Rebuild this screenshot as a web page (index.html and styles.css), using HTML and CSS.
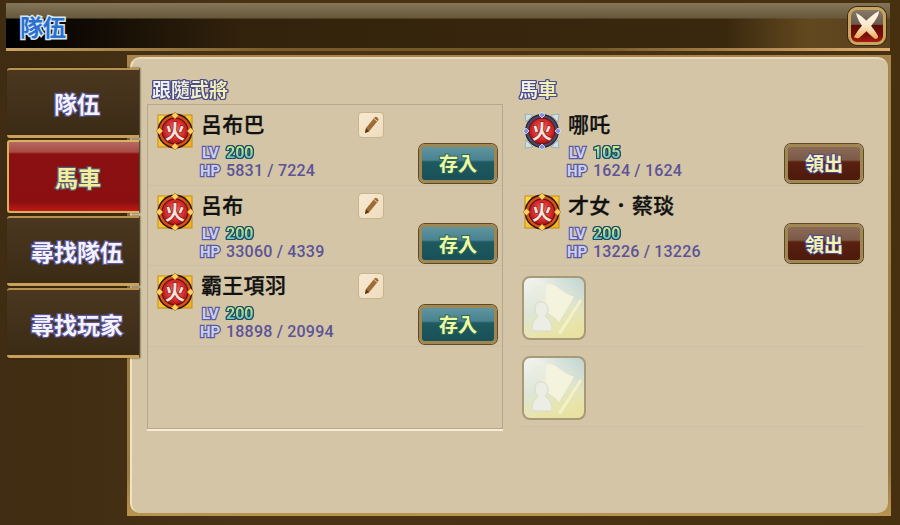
FILE: index.html
```html
<!DOCTYPE html>
<html lang="zh-Hant">
<head>
  <meta charset="UTF-8">
  <title>隊伍</title>
  <link rel="stylesheet" href="styles.css">
</head>
<body>

  <!-- Icons -->
  <svg class="defs" width="0" height="0">
    <defs>
      <radialGradient id="redBall" cx="50%" cy="45%" r="55%">
        <stop offset="0" stop-color="#f0706c"/>
        <stop offset="0.65" stop-color="#dc2f30"/>
        <stop offset="1" stop-color="#a81416"/>
      </radialGradient>
      <linearGradient id="goldSq" x1="0" y1="0" x2="1" y2="1">
        <stop offset="0" stop-color="#fbdc48"/>
        <stop offset="1" stop-color="#f0ac20"/>
      </linearGradient>
      <linearGradient id="blade" x1="0" y1="0" x2="0" y2="1">
        <stop offset="0" stop-color="#fdf8ea"/>
        <stop offset="0.55" stop-color="#f8e8c8"/>
        <stop offset="1" stop-color="#eca858"/>
      </linearGradient>
      <symbol id="badgeGold" viewBox="0 0 38 38">
        <rect x="2" y="3" width="34" height="32" fill="url(#goldSq)" stroke="#c88a18"/>
        <circle cx="19" cy="19" r="17.500" fill="#301408"/>
        <circle cx="19" cy="19" r="16" fill="#d4521c"/>
        <circle cx="19" cy="19" r="13.500" fill="#5a1008"/>
        <circle cx="19" cy="19" r="12.500" fill="url(#redBall)"/>
        <path d="M19 0l3.500 3.500-3.500 3.500-3.500-3.500zM19 31l3.500 3.500-3.500 3.500-3.500-3.500zM0 19l3.500-3.500 3.500 3.500-3.500 3.500zM31 19l3.500-3.500 3.500 3.500-3.500 3.500z" fill="#fad060" stroke="#b86a10" stroke-width=".6"/>
      </symbol>
      <symbol id="badgeSilver" viewBox="0 0 38 38">
        <path d="M2 2l8 1-7 7zM36 2l-8 1 7 7zM2 36l8-1-7-7zM36 36l-8-1 7-7z" fill="#d0e0e4" stroke="#8098a8" stroke-width=".6"/>
        <circle cx="19" cy="19" r="17" fill="#2a2a40"/>
        <circle cx="19" cy="19" r="15.500" fill="#4a4a6c"/>
        <circle cx="19" cy="19" r="13.500" fill="#6a1214"/>
        <circle cx="19" cy="19" r="12.500" fill="url(#redBall)"/>
        <path d="M19 0l3 3-3 3-3-3zM19 32l3 3-3 3-3-3zM0 19l3-3 3 3-3 3zM32 19l3-3 3 3-3 3z" fill="#8890e0" stroke="#eef0fa" stroke-width=".7"/>
      </symbol>
      <symbol id="pencil" viewBox="0 0 26 26">
        <path d="M7 21l1-5L16.500 5.500a1.800 1.800 0 0 1 2.800 0l.5.500a1.800 1.800 0 0 1 0 2.800L11 19.500z" fill="#a06c36"/>
        <path d="M16 6.500l3.500 3" stroke="#ead4ac" stroke-width="1"/>
        <path d="M7 21l1-5 3 3.500z" fill="#553818"/>
      </symbol>
      <symbol id="slotIcon" viewBox="0 0 60 60">
        <path d="M7 9c6-1 11-1 16 1l-2 14-4 0z" fill="#e8ecdc" opacity=".8"/>
        <path d="M23 6c3 0 5 0 7 1 6 4 12 9 20 12L35 44c-3-4-7-7-11-9 1-3 0-6-3-8z" fill="#f3f3de"/>
        <path d="M56 21l2 2-21 33-3-1z" fill="#f4f0c8"/>
        <path d="M17 24c4 0 7 3 7 7 0 3-1 5-3 7 4 3 7 7 7 12 0 2-1 3-3 3H12c-3 0-4-1-4-3 0-5 3-9 6-12-2-2-3-4-3-7 0-4 2-7 6-7z" fill="#eceee6" stroke="#dcdcc4"/>
      </symbol>
    </defs>
  </svg>

  <!-- Title bar -->
  <div class="titlebar">
    <div class="title">隊伍</div>
    <button class="close">
      <svg width="32" height="32" viewBox="0 0 32 32">
        <path d="M5 3c7 3 17 14 22 23 .5 2-1 3-3 3C16 23 7 13 5 3z" fill="url(#blade)"/>
        <path d="M28 1c0 8-13 21-20 27-2 .5-4 0-5-1C8 18 18 6 28 1z" fill="url(#blade)"/>
      </svg>
    </button>
  </div>

  <div class="main">
    <!-- Tabs -->
    <div class="tabs">
      <div class="tab">隊伍</div>
      <div class="tab active">馬車</div>
      <div class="tab">尋找隊伍</div>
      <div class="tab">尋找玩家</div>
    </div>

    <!-- Panel -->
    <div class="panel">
      <div class="panel-body">
        <div class="column">
          <h2 class="heading">跟隨武將</h2>
          <div class="box">
            <div class="row">
              <div class="badge"><svg width="38" height="38"><use href="#badgeGold"/></svg><span>火</span></div>
              <div class="info">
                <div class="name-line"><span class="name">呂布巴</span><span class="edit"><svg width="26" height="26"><use href="#pencil"/></svg></span></div>
                <div class="lv"><span class="tag">LV</span><span class="level">200</span></div>
                <div class="hp"><span class="tag">HP</span><span class="hp-val">5831 / 7224</span></div>
              </div>
              <button class="btn btn-store">存入</button>
            </div>
            <div class="row">
              <div class="badge"><svg width="38" height="38"><use href="#badgeGold"/></svg><span>火</span></div>
              <div class="info">
                <div class="name-line"><span class="name">呂布</span><span class="edit"><svg width="26" height="26"><use href="#pencil"/></svg></span></div>
                <div class="lv"><span class="tag">LV</span><span class="level">200</span></div>
                <div class="hp"><span class="tag">HP</span><span class="hp-val">33060 / 4339</span></div>
              </div>
              <button class="btn btn-store">存入</button>
            </div>
            <div class="row">
              <div class="badge"><svg width="38" height="38"><use href="#badgeGold"/></svg><span>火</span></div>
              <div class="info">
                <div class="name-line"><span class="name">霸王項羽</span><span class="edit"><svg width="26" height="26"><use href="#pencil"/></svg></span></div>
                <div class="lv"><span class="tag">LV</span><span class="level">200</span></div>
                <div class="hp"><span class="tag">HP</span><span class="hp-val">18898 / 20994</span></div>
              </div>
              <button class="btn btn-store">存入</button>
            </div>
          </div>
        </div>

        <div class="column column-right">
          <h2 class="heading">馬車</h2>
          <div class="list">
            <div class="row">
              <div class="badge"><svg width="38" height="38"><use href="#badgeSilver"/></svg><span>火</span></div>
              <div class="info">
                <div class="name-line"><span class="name">哪吒</span></div>
                <div class="lv"><span class="tag">LV</span><span class="level">105</span></div>
                <div class="hp"><span class="tag">HP</span><span class="hp-val">1624 / 1624</span></div>
              </div>
              <button class="btn btn-take">領出</button>
            </div>
            <div class="row">
              <div class="badge"><svg width="38" height="38"><use href="#badgeGold"/></svg><span>火</span></div>
              <div class="info">
                <div class="name-line"><span class="name">才女．蔡琰</span></div>
                <div class="lv"><span class="tag">LV</span><span class="level">200</span></div>
                <div class="hp"><span class="tag">HP</span><span class="hp-val">13226 / 13226</span></div>
              </div>
              <button class="btn btn-take">領出</button>
            </div>
            <div class="row row-empty"><div class="slot"><svg width="60" height="60"><use href="#slotIcon"/></svg></div></div>
            <div class="row row-empty"><div class="slot"><svg width="60" height="60"><use href="#slotIcon"/></svg></div></div>
          </div>
        </div>
      </div>
    </div>
  </div>

</body>
</html>
```

FILE: styles.css
```css
* {
  box-sizing: border-box;
}
body {
  margin: 0;
  width: 900px;
  height: 525px;
  overflow: hidden;
  background: linear-gradient(90deg, #3f2c12, #4a3315 30%, #46300f);
  font-family: "Noto Sans CJK TC", "Noto Sans", sans-serif;
}
.defs {
  position: absolute;
}
button {
  font-family: inherit;
  padding: 0;
  cursor: pointer;
}

/* Title bar */
.titlebar {
  height: 48px;
  margin: 3px 10px 0 6px;
  padding: 4px 4px 0 14px;
  display: flex;
  justify-content: space-between;
  background:
    linear-gradient(#85765a, #67583c 15px, transparent 16px),
    linear-gradient(90deg, #000 0, #0c0703 60px, #33230c 240px, #3a280e 720px, #62481e 800px, #5a4220 884px);
  border-bottom: 3px solid;
  border-image: linear-gradient(90deg, #c8a468, #7a5c28 30%, #6f5426 65%, #e0b070) 1;
}
.title {
  font-size: 23px;
  font-weight: 700;
  line-height: 30px;
  margin-top: 4px;
  color: #2a6fd0;
  -webkit-text-stroke: 3px #d6e8f4;
  paint-order: stroke fill;
}
.close {
  width: 38px;
  height: 38px;
  border: 3px solid #c9a45e;
  border-radius: 9px;
  background: linear-gradient(#877868, #6b5a4c 45%, #5c0c08 47%, #7a1008 80%, #a81c10);
  box-shadow: 0 0 0 1px #3a2810;
  display: flex;
  align-items: center;
  justify-content: center;
}

/* Tabs */
.main {
  display: flex;
  padding: 4px 0 0 7px;
}
.tabs {
  width: 132px;
  flex: none;
  margin: 13px -12px 0 0;
  display: flex;
  flex-direction: column;
  z-index: 1;
}
.tab {
  height: 70px;
  margin-bottom: 2px;
  padding-left: 8px;
  display: flex;
  align-items: center;
  justify-content: center;
  border-top: 2px solid #b8934f;
  border-bottom: 3px solid #c8a25a;
  border-radius: 3px 0 0 3px;
  background: linear-gradient(#4b3720, #3b2b15);
  box-shadow: 1px 0 2px #2a1c08;
  font-size: 23px;
  font-weight: 700;
  color: #f4f2fa;
  -webkit-text-stroke: 2.500px #5a579c;
  paint-order: stroke fill;
}
.tab:nth-child(3) {
  margin-top: 1px;
}
.tab:last-child {
  padding-top: 2px;
}
.tab.active {
  height: 73px;
  border: 2px solid #d8b25e;
  border-right: none;
  background: linear-gradient(#b56a62, #a84a44 10px, #8a1012 12px, #8c0f10 60px, #c01a16);
  color: #f2eea0;
  -webkit-text-stroke: 2.500px #5a5a70;
}

/* Panel */
.panel {
  width: 764px;
  height: 461px;
  padding: 2px 3px 3px 3px;
  background: linear-gradient(#a8854c, #9a7a42 90%, #b8944f);
}
.panel-body {
  height: 100%;
  padding: 17px 0 0 15px;
  display: flex;
  gap: 17px;
  background: #d3c5a5;
  border-radius: 10px;
  border-top: 2px solid #e6dabc;
  border-left: 2px solid #efe3c6;
}
.column {
  width: 356px;
}
.column-right {
  width: 345px;
}
.heading {
  margin: 0 0 3px 5px;
  font-size: 19px;
  font-weight: 700;
  line-height: 25px;
  width: max-content;
  color: transparent;
  background: linear-gradient(90deg, #f0f0f4, #f4f0a0);
  -webkit-background-clip: text;
  background-clip: text;
  filter: drop-shadow(1px 0 0 #4a4a90) drop-shadow(-1px 0 0 #4a4a90) drop-shadow(0 1px 0 #4a4a90) drop-shadow(0 -1px 0 #4a4a90);
}
.column-right .heading {
  margin-left: -1px;
}
.box {
  height: 325px;
  border: 1px solid #b5a98c;
  border-bottom: none;
  box-shadow: 0 2px 0 #f9ecd4, inset 0 -1px 0 #b5a98c;
}
.list {
  padding-top: 1px;
}

/* Rows */
.row {
  height: 80.500px;
  padding: 7px 5px 0 8px;
  display: flex;
  border-bottom: 1px solid #cdbfa2;
}
.column-right .row {
  padding-left: 3px;
  padding-right: 2px;
}
.column-right .row-empty {
  padding-top: 10px;
  padding-left: 2px;
}
.column-right .row-empty + .row-empty {
  padding-top: 9px;
}
.badge {
  width: 38px;
  height: 38px;
  flex: none;
  display: grid;
  place-items: center;
}
.badge > * {
  grid-area: 1 / 1;
}
.badge span {
  font-size: 20px;
  line-height: 1;
  font-weight: 700;
  color: #fbe4dc;
  -webkit-text-stroke: 1.500px #8a1a18;
  paint-order: stroke fill;
}
.info {
  width: 183px;
  margin-left: 7px;
  flex: none;
}
.name-line {
  height: 26px;
  display: flex;
  align-items: center;
  justify-content: space-between;
}
.name {
  margin-bottom: 4px;
  font-size: 21px;
  font-weight: 500;
  line-height: 26px;
  letter-spacing: 0.3px;
  color: #111;
  -webkit-text-stroke: 0.3px #111;
  white-space: nowrap;
}
.edit {
  width: 26px;
  height: 26px;
  display: block;
  border: 1px solid #c9b48c;
  border-radius: 4px;
  background: linear-gradient(135deg, #f6ead2, #efdcbc);
  overflow: hidden;
}
.edit svg {
  display: block;
  margin: -1px;
}
.lv, .hp {
  display: flex;
  align-items: center;
  height: 18px;
  line-height: 16px;
}
.lv {
  margin-top: 6px;
}
.tag {
  width: 25px;
  flex: none;
  font-family: Roboto, sans-serif;
  font-size: 15px;
  font-weight: 700;
  color: #cdd0ee;
  -webkit-text-stroke: 2.500px #5b5aa4;
  paint-order: stroke fill;
}
.lv .tag {
  padding-left: 1px;
}
.hp .tag {
  margin-left: -1px;
  width: 26px;
}
.level {
  font-family: Roboto, sans-serif;
  font-size: 16px;
  font-weight: 700;
  color: transparent;
  background: linear-gradient(#d8f088, #8ed8a0 55%, #50b0c8);
  -webkit-background-clip: text;
  background-clip: text;
  filter: drop-shadow(1px 0 0 #1f4a68) drop-shadow(-1px 0 0 #1f4a68) drop-shadow(0 1px 0 #1f4a68) drop-shadow(0 -1px 0 #1f4a68);
}
.hp-val {
  font-family: Roboto, sans-serif;
  font-size: 16px;
  font-weight: 500;
  letter-spacing: 0.2px;
  color: #5c5398;
  white-space: nowrap;
}
.btn {
  width: 78px;
  height: 39px;
  flex: none;
  align-self: flex-end;
  margin: 0 0 2px auto;
  border: 3px solid #a08650;
  border-radius: 6px;
  box-shadow: 0 0 0 1px #5a4a2a;
  font-size: 19px;
  font-weight: 700;
  line-height: 30px;
}
.btn-store {
  background: linear-gradient(#5f95a0, #4a8290 13px, #1e5a60 15px, #1a5058);
  color: #f0f8a8;
  -webkit-text-stroke: 2px #2a6a50;
  paint-order: stroke fill;
}
.btn-take {
  background: linear-gradient(#8c6a58, #7c5a48 13px, #5a2010 15px, #4c1a0c);
  color: #f6f2b0;
  -webkit-text-stroke: 2px #4a4a90;
  paint-order: stroke fill;
}
.slot {
  width: 64px;
  height: 64px;
  padding: 0;
  border: 2px solid #a89a78;
  border-radius: 8px;
  background:
    linear-gradient(215deg, #bfd4d0 0, rgba(200, 220, 215, 0) 35%),
    linear-gradient(160deg, #f2f4f0, #dfe6d8 45%, #e8e4a8 80%, #e8e09c);
}
.slot svg {
  display: block;
}
```
